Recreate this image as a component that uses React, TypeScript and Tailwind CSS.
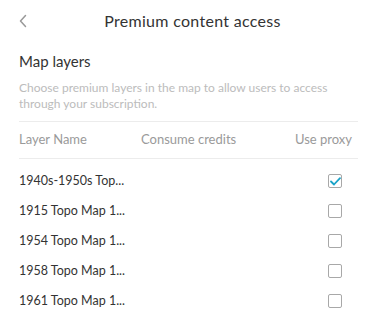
const layers = [
  { name: '1940s-1950s Top...', proxy: true },
  { name: '1915 Topo Map 1...', proxy: false },
  { name: '1954 Topo Map 1...', proxy: false },
  { name: '1958 Topo Map 1...', proxy: false },
  { name: '1961 Topo Map 1...', proxy: false },
]

function Checkbox({ checked }: { checked: boolean }) {
  return (
    <span className="flex h-[14px] w-[14px] items-center justify-center rounded-[2px] border border-[#a8a8a8] bg-white">
      {checked && (
        <svg width="11" height="9" viewBox="0 0 11 9" fill="none">
          <path d="M1 4.5 L4 7.5 L10 1.2" stroke="#1aa3c8" strokeWidth="1.8" strokeLinecap="round" strokeLinejoin="round" />
        </svg>
      )}
    </span>
  )
}

export default function App() {
  return (
    <div className="h-[324px] w-[373px] overflow-hidden bg-white font-['Lato',sans-serif] text-[#333]">
      <header className="relative flex h-[42px] items-center justify-center pl-[12px]">
        <svg width="10" height="14" viewBox="0 0 10 14" fill="none" className="absolute left-[18px] top-[14px]">
          <path d="M7.5 1.5 L2.5 7 L7.5 12.5" stroke="#999" strokeWidth="1.5" strokeLinecap="round" strokeLinejoin="round" />
        </svg>
        <h1 className="text-[16px] tracking-[0.3px] text-[#333]">Premium content access</h1>
      </header>

      <section className="pl-[19px] pr-[15px] pt-[8px]">
        <h2 className="text-[15px] leading-[22px] text-[#333]">Map layers</h2>
        <p className="mt-[8px] text-[12px] leading-[16px] text-[#bcbcbc]">
          Choose premium layers in the map to allow users to access through your subscription.
        </p>

        <div className="mt-[9px] border-t border-[#ececec]">
          <div className="grid h-[37px] grid-cols-[122px_1fr_auto] items-center border-b border-[#ececec] pr-[6px] text-[13px] text-[#9a9a9a]">
            <span>Layer Name</span>
            <span>Consume credits</span>
            <span>Use proxy</span>
          </div>
          <ul className="pt-[7px]">
            {layers.map((l) => (
              <li key={l.name} className="flex h-[30px] items-center justify-between pr-[16px] text-[12.5px] text-[#333]">
                <span>{l.name}</span>
                <Checkbox checked={l.proxy} />
              </li>
            ))}
          </ul>
        </div>
      </section>
    </div>
  )
}
